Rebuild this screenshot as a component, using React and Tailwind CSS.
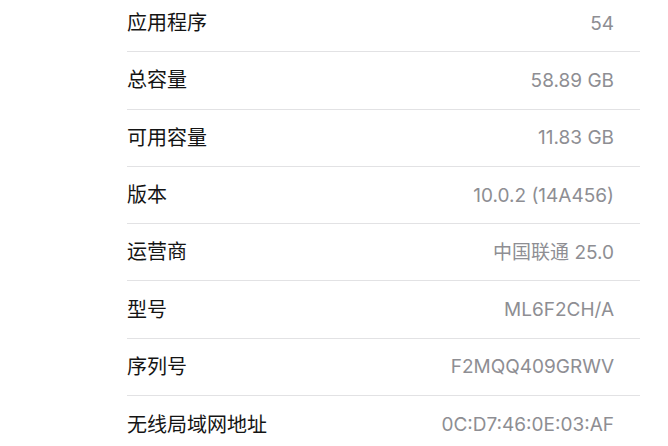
const ROWS = [
  ['应用程序', '54'],
  ['总容量', '58.89 GB'],
  ['可用容量', '11.83 GB'],
  ['版本', '10.0.2 (14A456)'],
  ['运营商', '中国联通 25.0'],
  ['型号', 'ML6F2CH/A'],
  ['序列号', 'F2MQQ409GRWV'],
  ['无线局域网地址', '0C:D7:46:0E:03:AF'],
]

export default function App() {
  return (
    <div
      className="h-[446px] w-[668px] overflow-hidden bg-white"
      style={{ fontFamily: 'Inter, "Noto Sans CJK SC", sans-serif' }}
    >
      <ul className="ml-[127px] w-[513px] -mt-[5px]">
        {ROWS.map(([label, value], i) => (
          <li
            key={label}
            className={`flex h-[57.3px] items-center justify-between pr-[26px] ${
              i < ROWS.length - 1 ? 'border-b border-[#e2e2e4]' : ''
            }`}
          >
            <span className="text-[20px] leading-none text-[#141414]">{label}</span>
            <span className="text-[19px] leading-none text-[#8e8e93]">{value}</span>
          </li>
        ))}
      </ul>
    </div>
  )
}
